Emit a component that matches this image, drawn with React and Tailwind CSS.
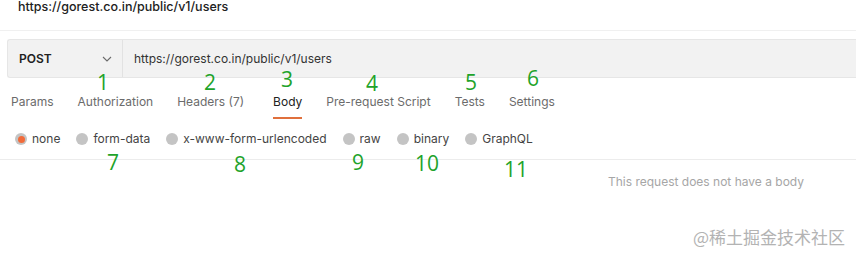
import React from "react";

const tabs = [
  { label: "Params" },
  { label: "Authorization" },
  { label: "Headers (7)", wide: true },
  { label: "Body", active: true },
  { label: "Pre-request Script" },
  { label: "Tests" },
  { label: "Settings" },
];

const bodyTypes = ["none", "form-data", "x-www-form-urlencoded", "raw", "binary", "GraphQL"];

// annotation numbers drawn over the screenshot
const marks = [
  { n: "1", x: 97, y: 70 },
  { n: "2", x: 204, y: 70 },
  { n: "3", x: 281, y: 67 },
  { n: "4", x: 366, y: 71 },
  { n: "5", x: 465, y: 70 },
  { n: "6", x: 527, y: 66 },
  { n: "7", x: 107, y: 150 },
  { n: "8", x: 234, y: 152 },
  { n: "9", x: 352, y: 150 },
  { n: "10", x: 415, y: 151 },
  { n: "11", x: 504, y: 157 },
];

function Radio({ checked }) {
  return (
    <span className="flex h-3 w-3 items-center justify-center rounded-full bg-[#c4c4c4]">
      {checked && <span className="h-[7px] w-[7px] rounded-full bg-[#f26b3a]" />}
    </span>
  );
}

export default function App() {
  return (
    <div className="relative h-[257px] w-[856px] overflow-hidden bg-white font-['Inter',sans-serif]">
      <div className="h-[30px] px-[18px] text-[12.5px] font-medium leading-[13px] text-[#212121]">
        https://gorest.co.in/public/v1/users
      </div>
      <div className="h-px bg-[#f0f0f0]" />

      <div className="ml-[7px] mt-[8px] flex h-[39px] rounded-l-[3px] border border-r-0 border-[#e6e6e6] bg-[#f2f2f2]">
        <div className="flex w-[115px] items-center justify-between border-r border-[#e2e2e2] pl-[11px] pr-[10px]">
          <span className="text-[12px] font-semibold text-[#212121]">POST</span>
          <svg width="10" height="6" viewBox="0 0 10 6" fill="none" stroke="#6b6b6b" strokeWidth="1.1">
            <path d="M1 1l4 4 4-4" />
          </svg>
        </div>
        <div className="flex items-center pl-[11px] text-[12px] text-[#333]">
          https://gorest.co.in/public/v1/users
        </div>
      </div>

      <div className="mt-[16px] flex h-[25px] pl-[11px] text-[12px] leading-[16px]">
        {tabs.map((t) => (
          <div key={t.label} className={`flex flex-col ${t.wide ? "mr-[29px]" : "mr-[24px]"}`}>
            <span className={t.active ? "text-[#212121]" : "text-[#6b6b6b]"}>{t.label}</span>
            {t.active && <span className="mt-[7px] h-[2px] bg-[#e0703c]" />}
          </div>
        ))}
      </div>

      <div className="mt-[10px] flex h-[20px] items-center gap-[16px] pl-[15px] text-[12px] text-[#444]">
        {bodyTypes.map((b, i) => (
          <label key={b} className="flex items-center gap-[5px]">
            <Radio checked={i === 0} />
            <span>{b}</span>
          </label>
        ))}
      </div>

      <div className="mt-[10px] h-px bg-[#ececec]" />

      <div className="mt-[14px] flex justify-end pr-[52px] text-[12px] leading-[16px] text-[#a6a6a6]">
        This request does not have a body
      </div>

      <div className="mt-[35px] flex justify-end pr-[11px] font-['Noto_Sans_CJK_SC',sans-serif] text-[17px] leading-[24px] text-[#b3b3b3]">
        @稀土掘金技术社区
      </div>

      {marks.map((m) => (
        <span
          key={m.n}
          className="absolute font-['Open_Sans',sans-serif] text-[21px] leading-[24px] text-[#1ea32a]"
          style={{ left: m.x, top: m.y }}
        >
          {m.n}
        </span>
      ))}
    </div>
  );
}
